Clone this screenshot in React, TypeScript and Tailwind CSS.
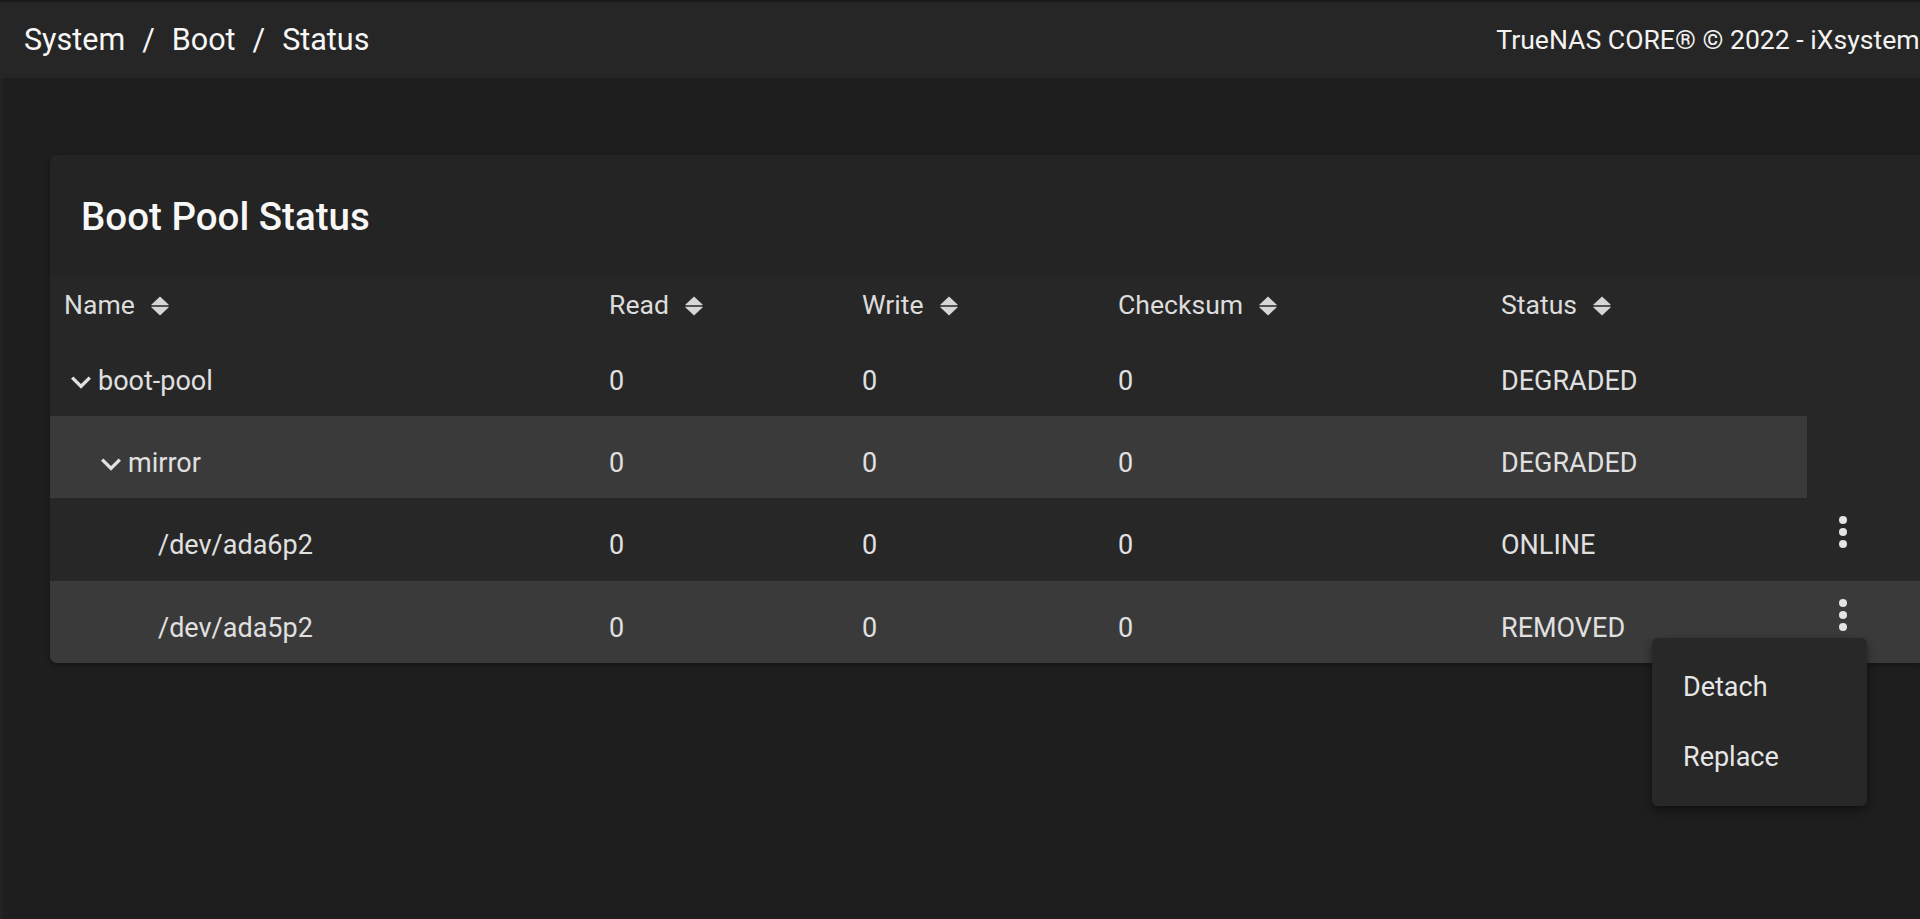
import React from 'react';

const font = { fontFamily: 'Roboto, "Liberation Sans", sans-serif' };

type Row = {
  name: string;
  level: number;
  expandable: boolean;
  status: string;
  stripe: 'none' | 'partial' | 'full';
  actions: boolean;
  h: string;
};

const rows: Row[] = [
  { name: 'boot-pool', level: 0, expandable: true, status: 'DEGRADED', stripe: 'none', actions: false, h: 'h-[82px]' },
  { name: 'mirror', level: 1, expandable: true, status: 'DEGRADED', stripe: 'partial', actions: false, h: 'h-[82px]' },
  { name: '/dev/ada6p2', level: 2, expandable: false, status: 'ONLINE', stripe: 'none', actions: true, h: 'h-[83px]' },
  { name: '/dev/ada5p2', level: 2, expandable: false, status: 'REMOVED', stripe: 'full', actions: true, h: 'h-[82px]' },
];

const indents = ['pl-[7px]', 'pl-[37px]', 'pl-[67px]'];

function SortIcon() {
  return (
    <svg width="18" height="20" viewBox="0 0 18 20" className="shrink-0 text-[#d6d6d6]">
      <path d="M9 0.5 L17.5 8.6 Q18 9.2 17.2 9.2 L0.8 9.2 Q0 9.2 0.5 8.6 Z" fill="currentColor" />
      <path d="M0.8 10.8 L17.2 10.8 Q18 10.8 17.5 11.4 L9 19.5 L0.5 11.4 Q0 10.8 0.8 10.8 Z" fill="currentColor" />
    </svg>
  );
}

function Chevron() {
  return (
    <svg width="20" height="13" viewBox="6 8.3 12 7.8" className="mt-[3px] shrink-0 text-[#e0e0e0]">
      <path d="M16.59 8.59L12 13.17 7.41 8.59 6 10l6 6 6-6z" fill="currentColor" />
    </svg>
  );
}

function Kebab() {
  return (
    <svg width="8" height="32" viewBox="0 0 8 32" className="mb-[15px] text-[#e4e4e4]">
      <circle cx="4" cy="4" r="4" fill="currentColor" />
      <circle cx="4" cy="16" r="4" fill="currentColor" />
      <circle cx="4" cy="28" r="4" fill="currentColor" />
    </svg>
  );
}

const cols = [
  { label: 'Name', w: 'w-[545px]' },
  { label: 'Read', w: 'w-[253px]' },
  { label: 'Write', w: 'w-[256px]' },
  { label: 'Checksum', w: 'w-[383px]' },
  { label: 'Status', w: 'w-[306px]' },
];

export default function App() {
  return (
    <div style={font} className="relative flex h-[919px] w-full flex-col overflow-hidden bg-[#1e1e1e] text-[#e0e0e0]">
      <div className="h-[2px] shrink-0 bg-[#1a1a1a]" />
      <header className="flex h-[76px] shrink-0 items-center overflow-hidden bg-[#262626] pl-[24px] text-[#f7f7f7]">
        <nav className="flex items-center text-[30.5px] leading-none">
          <span>System</span>
          <span className="px-[17px]">/</span>
          <span>Boot</span>
          <span className="px-[17px]">/</span>
          <span>Status</span>
        </nav>
        <div className="-mr-[68px] ml-auto shrink-0 whitespace-nowrap text-[26.6px] leading-none text-[#f2f2f2]">
          TrueNAS CORE® © 2022 - iXsystems, Inc.
        </div>
      </header>

      <div className="flex flex-1">
        <div className="w-[3px] shrink-0 bg-[#232323]" />
        <main className="flex-1 pl-[47px] pt-[77px]">
          <section className="overflow-hidden rounded-l-[7px] bg-[#242424] shadow-[0_2px_4px_rgba(0,0,0,0.35)]">
            <div className="flex h-[122px] items-center pl-[31px]">
              <h1 className="mt-[2px] text-[38.5px] font-medium leading-none text-[#f7f7f7]">Boot Pool Status</h1>
            </div>

            <div className="bg-[#272727] text-[27px] leading-none">
              <div className="flex h-[57px] items-center pl-[14px] text-[#dcdcdc]">
                {cols.map((c) => (
                  <div key={c.label} className={`flex items-center gap-[16px] ${c.w}`}>
                    <span className="text-[26.6px]">{c.label}</span>
                    <SortIcon />
                  </div>
                ))}
              </div>

              {rows.map((r) => (
                <div key={r.name} className={`flex ${r.h} ${r.stripe === 'full' ? 'bg-[#3a3a3a]' : ''}`}>
                  <div className={`flex w-[1757px] shrink-0 items-center pl-[14px] pt-[12px] ${r.stripe === 'partial' ? 'bg-[#3a3a3a]' : ''}`}>
                    <div className={`flex w-[545px] items-center gap-[7px] ${indents[r.level]}`}>
                      {r.expandable ? <Chevron /> : <div className="w-[20px]" />}
                      <span>{r.name}</span>
                    </div>
                    <div className="w-[253px]">0</div>
                    <div className="w-[256px]">0</div>
                    <div className="w-[383px]">0</div>
                    <div className="w-[306px]">{r.status}</div>
                  </div>
                  <div className="flex flex-1 items-center pl-[32px]">{r.actions ? <Kebab /> : null}</div>
                </div>
              ))}
            </div>
          </section>
        </main>
      </div>

      <div className="absolute left-[1652px] top-[638px] w-[215px] rounded-[6px] bg-[#282828] py-[14px] text-[27px] leading-none text-[#e6e6e6] shadow-[0_4px_10px_rgba(0,0,0,0.45)]">
        <div className="flex h-[70px] items-center px-[31px]">Detach</div>
        <div className="flex h-[70px] items-center px-[31px]">Replace</div>
      </div>
    </div>
  );
}
